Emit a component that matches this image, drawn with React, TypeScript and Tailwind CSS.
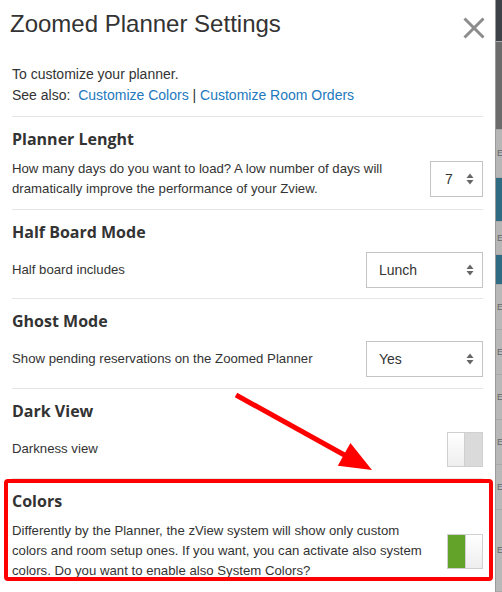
import React from "react";

const body = { fontFamily: '"Liberation Sans", Arial, sans-serif' };
const head = { fontFamily: '"Open Sans", "Liberation Sans", sans-serif' };

function Arrows() {
  return (
    <svg width="8" height="12" viewBox="0 0 8 12" className="shrink-0">
      <path d="M0.5 5 L4 0.5 L7.5 5 Z" fill="#666" />
      <path d="M0.5 7 L4 11.5 L7.5 7 Z" fill="#666" />
    </svg>
  );
}

function Select({ value, wide }: { value: string; wide?: boolean }) {
  return (
    <div
      className={`flex h-[36px] shrink-0 items-center justify-between border border-[#c4c4c4] bg-white pr-[8px] text-[14px] text-[#333] ${
        wide ? "w-[117px] pl-[12px]" : "w-[53px] pl-[14px]"
      }`}
    >
      <span>{value}</span>
      <Arrows />
    </div>
  );
}

function Toggle({ on }: { on?: boolean }) {
  return (
    <div className="flex h-[35px] w-[36px] shrink-0 border border-[#d0d0d0]">
      {on ? (
        <>
          <div className="w-1/2 bg-[#63a32a]" />
          <div className="w-1/2 border-l border-[#cfcfcf] bg-gradient-to-b from-[#ffffff] to-[#eeeeef]" />
        </>
      ) : (
        <>
          <div className="w-1/2 border-r border-[#cfcfcf] bg-gradient-to-b from-[#ffffff] to-[#eeeeef]" />
          <div className="w-1/2 bg-[#dadada]" />
        </>
      )}
    </div>
  );
}

function Section({
  title,
  children,
  control,
  pad = "pt-[11px] pb-[10px]",
}: {
  title: string;
  children: React.ReactNode;
  control: React.ReactNode;
  pad?: string;
}) {
  return (
    <div className={`border-t border-[#e5e5e5] ${pad}`}>
      <h3 style={head} className="text-[16px] font-bold leading-[22px] text-[#333]">
        {title}
      </h3>
      <div className="mt-[9px] flex min-h-[36px] items-center justify-between gap-3">
        <p className="text-[13.2px] leading-[20px] text-[#333]">{children}</p>
        {control}
      </div>
    </div>
  );
}

function Strip() {
  const parts: [string, number, boolean][] = [
    ["bg-[#3d4249]", 42, false],
    ["bg-[#6b6b6b]", 88, false],
    ["bg-[#b6b6b6]", 48, true],
    ["bg-[#2f6c83]", 44, false],
    ["bg-[#b6b6b6]", 33, true],
    ["bg-[#2f6c83]", 30, false],
    ["bg-[#b8b8b8]", 45, true],
    ["bg-[#b8b8b8]", 45, true],
    ["bg-[#b8b8b8]", 45, true],
    ["bg-[#b8b8b8]", 45, true],
    ["bg-[#b8b8b8]", 45, true],
    ["bg-[#b8b8b8]", 82, true],
  ];
  return (
    <div className="flex flex-1 flex-col overflow-hidden border-l border-[#9a9a9a]">
      {parts.map(([c, h, e], i) => (
        <div
          key={i}
          className={`${c} flex shrink-0 items-center border-b border-[#a9a9a9] pl-[1px] text-[9px] leading-none text-[#666]`}
          style={{ height: h }}
        >
          {e ? "E" : ""}
        </div>
      ))}
    </div>
  );
}

export default function App() {
  return (
    <div style={body} className="flex h-[592px] w-[502px] overflow-hidden bg-white">
      <div className="relative w-[495px] shrink-0 overflow-hidden bg-white">
        <div className="flex h-[64px] items-start justify-between pl-[10px] pr-[10px] pt-[11px]">
          <h2 className="text-[24px] leading-[26px] text-[#333]">Zoomed Planner Settings</h2>
          <svg width="22" height="22" viewBox="0 0 22 22" className="mt-[6px]">
            <path d="M1.5 1.5 L20.5 20.5 M20.5 1.5 L1.5 20.5" stroke="#8c8c8c" strokeWidth="3" />
          </svg>
        </div>

        <div className="px-3">
          <div className="pb-[10px] text-[14px] leading-[21px] text-[#333]">
            <p>To customize your planner.</p>
            <p>
              See also:&nbsp;{" "}
              <a className="text-[#2379be]">Customize Colors</a> |{" "}
              <a className="text-[#2379be]">Customize Room Orders</a>
            </p>
          </div>

          <Section title="Planner Lenght" control={<Select value="7" />}>
            How many days do you want to load? A low number of days will dramatically improve the
            performance of your Zview.
          </Section>
          <Section title="Half Board Mode" control={<Select value="Lunch" wide />}>
            Half board includes
          </Section>
          <Section title="Ghost Mode" control={<Select value="Yes" wide />} pad="pt-[11px] pb-[11px]">
            Show pending reservations on the Zoomed Planner
          </Section>
          <Section title="Dark View" control={<Toggle />} pad="pt-[11px] pb-[11px]">
            Darkness view
          </Section>
          <Section title="Colors" control={<Toggle on />} pad="pt-[11px] pb-[10px]">
            Differently by the Planner, the zView system will show only custom colors and room setup
            ones. If you want, you can activate also system colors. Do you want to enable also System
            Colors?
          </Section>
        </div>

        <div className="absolute left-[4px] top-[479px] h-[102px] w-[489px] rounded-[4px] border-4 border-[#ff0000]" />
        <svg className="absolute left-0 top-0" width="495" height="592" viewBox="0 0 495 592">
          <line x1="236" y1="395" x2="348" y2="457" stroke="#ff0000" strokeWidth="5" />
          <polygon points="372,470 337.8,465.7 350.4,443.1" fill="#ff0000" />
        </svg>
      </div>
      <Strip />
    </div>
  );
}
